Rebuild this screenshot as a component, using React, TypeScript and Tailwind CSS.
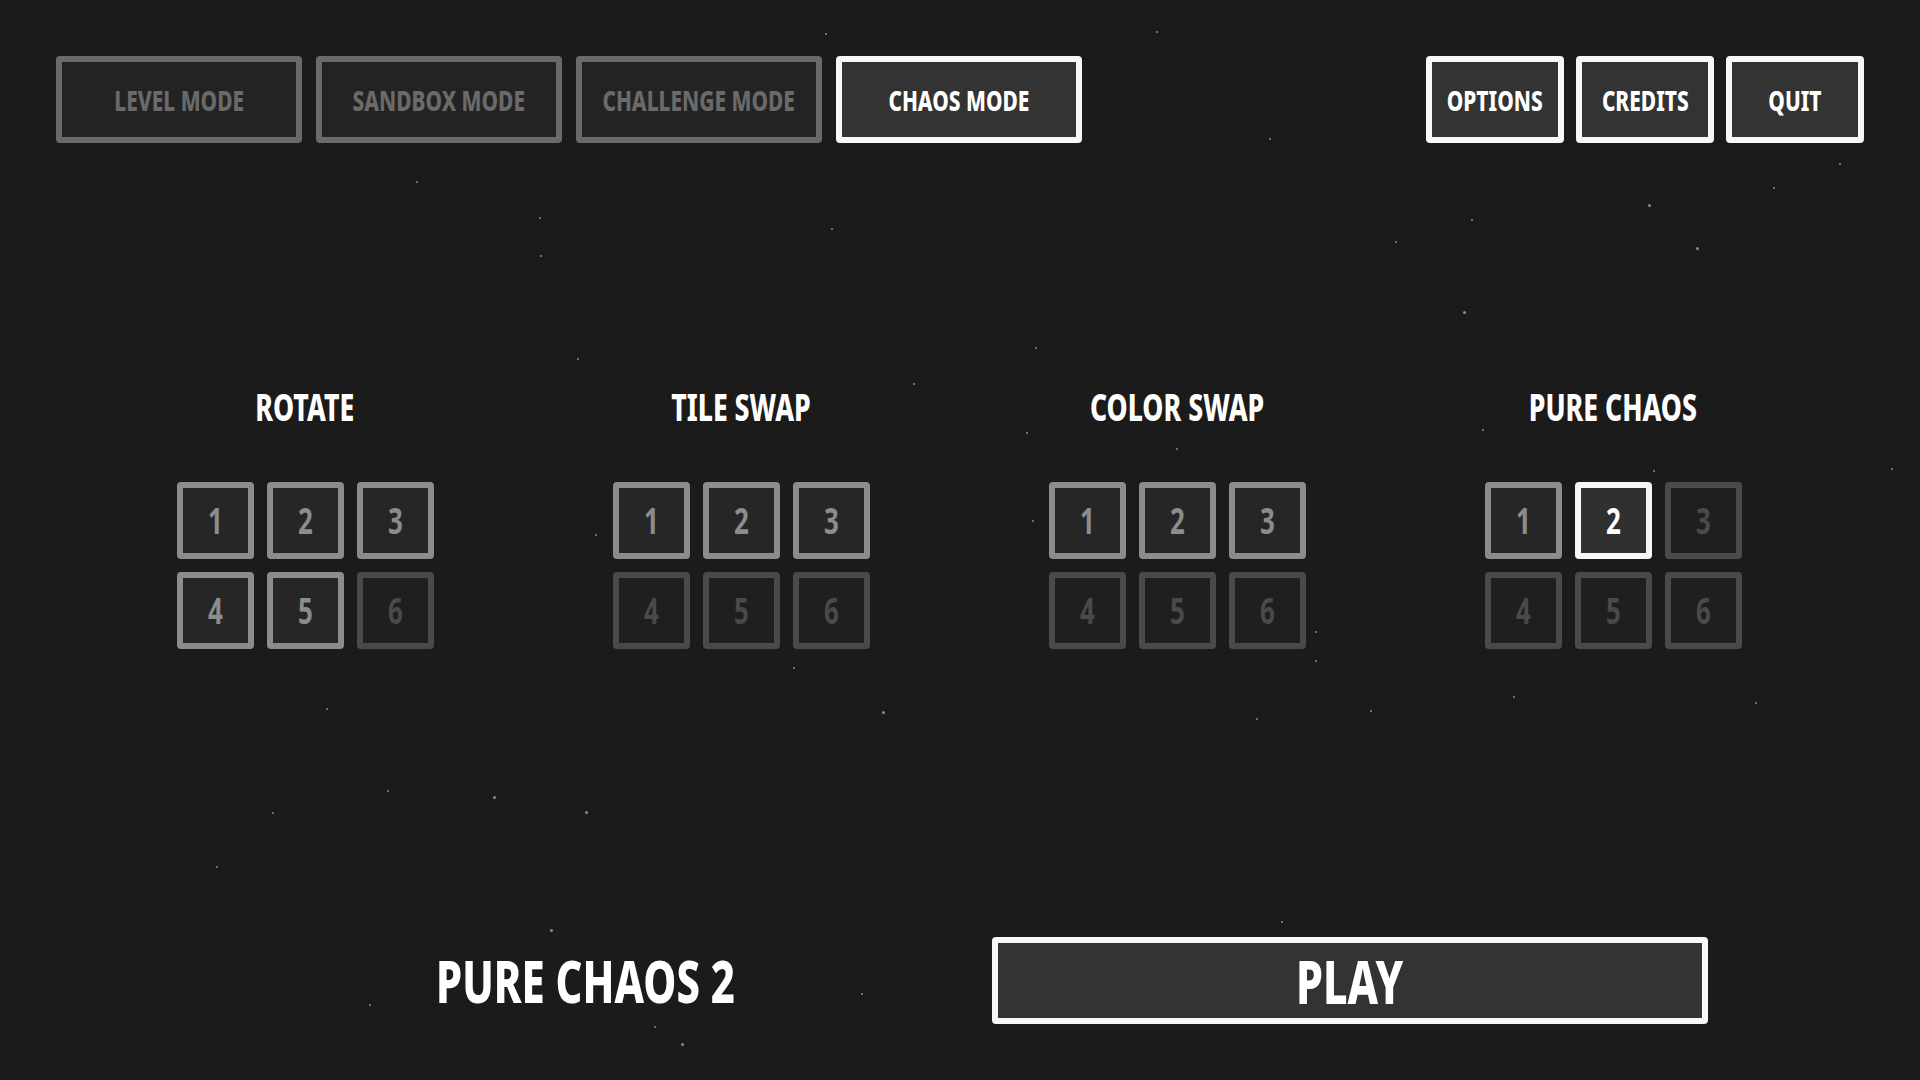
import React from "react";

const stars: [number, number, number][] = [
  [674, 27, 2], [944, 25, 2], [1036, 113, 2], [1346, 167, 3], [1201, 179, 2], [1385, 202, 3],
  [1448, 153, 2], [1502, 133, 2], [441, 208, 2], [440, 177, 2], [1195, 254, 3], [1139, 197, 2],
  [471, 292, 2], [746, 313, 2], [845, 283, 2], [838, 353, 2], [960, 366, 2], [1210, 350, 2],
  [1544, 382, 2], [486, 436, 2], [520, 442, 2], [843, 425, 2], [1350, 384, 2], [1300, 485, 2],
  [648, 545, 2], [720, 581, 3], [1074, 515, 2], [1074, 539, 2], [1119, 580, 2], [1026, 586, 2],
  [1236, 568, 2], [1433, 573, 2], [266, 578, 2], [222, 663, 2], [316, 645, 2], [403, 650, 3],
  [478, 662, 3], [176, 707, 2], [449, 759, 3], [301, 820, 2], [534, 838, 2], [556, 852, 3],
  [703, 811, 2], [869, 786, 3], [825, 808, 2], [1046, 752, 2], [340, 148, 2], [679, 186, 2],
];

const font = "font-['Noto_Sans',sans-serif]";

function T({ children }: { children: React.ReactNode }) {
  return <span className="inline-block whitespace-nowrap scale-x-[0.72]">{children}</span>;
}

function TopButton({ label, active, w }: { label: string; active?: boolean; w: string }) {
  return (
    <div
      className={`${w} h-[87px] rounded-[4px] border-[6px] flex items-center justify-center text-[29px] font-extrabold leading-none ${
        active ? "border-[#f7f7f7] bg-[#333333] text-white" : "border-[#6a6a6a] bg-[#232323] text-[#6a6a6a]"
      }`}
    >
      <T>{label}</T>
    </div>
  );
}

type TileState = "on" | "sel" | "off";

function Tile({ n, s }: { n: number; s: TileState }) {
  const cls =
    s === "sel"
      ? "border-[#f7f7f7] bg-[#303030] text-white"
      : s === "on"
      ? "border-[#8c8c8c] bg-[#262626] text-[#8c8c8c]"
      : "border-[#4a4a4a] bg-[#1f1f1f] text-[#4a4a4a]";
  return (
    <div
      className={`w-[77px] h-[77px] rounded-[4px] border-[6px] flex items-center justify-center text-[36px] font-bold leading-none ${cls}`}
    >
      <T>{n}</T>
    </div>
  );
}

function Category({ title, states }: { title: string; states: TileState[] }) {
  return (
    <div className="flex flex-col items-center">
      <div className="h-[36px] flex items-center text-[37px] font-extrabold text-white leading-none">
        <T>{title}</T>
      </div>
      <div className="mt-[58px] grid grid-cols-3 gap-[13px]">
        {states.map((s, i) => (
          <Tile key={i} n={i + 1} s={s} />
        ))}
      </div>
    </div>
  );
}

export default function App() {
  return (
    <div className={`relative w-[1920px] h-[1080px] overflow-hidden bg-[#1b1b1b] ${font}`}>
      {stars.map(([x, y, s], i) => (
        <div
          key={i}
          className="absolute rounded-full bg-[#8f8f7c]"
          style={{ left: x * 1.2245, top: y * 1.2245, width: s, height: s }}
        />
      ))}
      <div className="relative flex flex-col h-full">
        <div className="flex justify-between px-[56px] pt-[56px]">
          <div className="flex gap-[14px]">
            <TopButton w="w-[246px]" label="LEVEL MODE" />
            <TopButton w="w-[246px]" label="SANDBOX MODE" />
            <TopButton w="w-[246px]" label="CHALLENGE MODE" />
            <TopButton w="w-[246px]" label="CHAOS MODE" active />
          </div>
          <div className="flex gap-[12px]">
            <TopButton w="w-[138px]" label="OPTIONS" active />
            <TopButton w="w-[138px]" label="CREDITS" active />
            <TopButton w="w-[138px]" label="QUIT" active />
          </div>
        </div>
        <div className="mt-[245px] ml-[87px] grid grid-cols-[436px_436px_436px_436px]">
          <Category title="ROTATE" states={["on", "on", "on", "on", "on", "off"]} />
          <Category title="TILE SWAP" states={["on", "on", "on", "off", "off", "off"]} />
          <Category title="COLOR SWAP" states={["on", "on", "on", "off", "off", "off"]} />
          <Category title="PURE CHAOS" states={["on", "sel", "off", "off", "off", "off"]} />
        </div>
        <div className="mt-[288px] flex items-center pl-[335px]">
          <div className="w-[500px] flex justify-center text-[58px] font-extrabold text-white leading-none">
            <T>PURE CHAOS 2</T>
          </div>
          <div className="ml-[157px] w-[716px] h-[87px] rounded-[4px] border-[6px] border-[#f7f7f7] bg-[#333333] flex items-center justify-center text-[60px] font-extrabold text-white leading-none">
            <T>PLAY</T>
          </div>
        </div>
      </div>
    </div>
  );
}
